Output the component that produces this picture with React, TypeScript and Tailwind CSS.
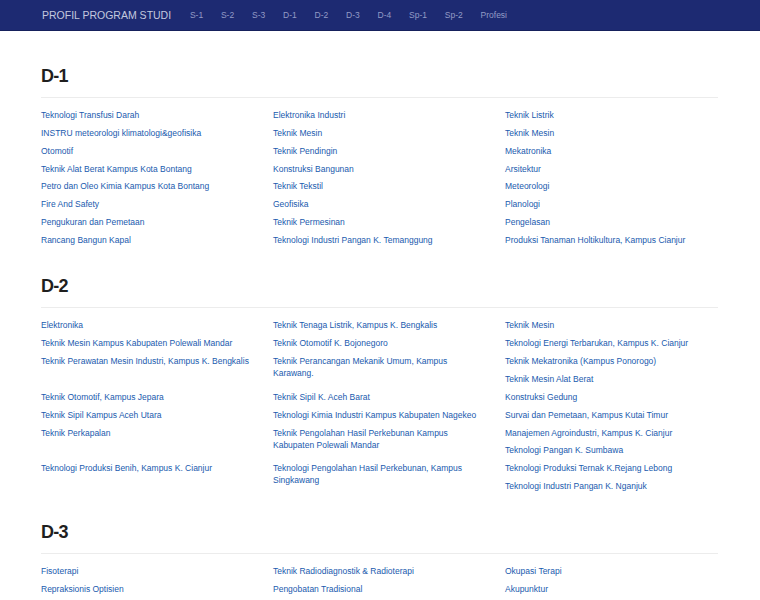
import React from 'react';

type Cell = { t: string; span?: boolean } | null;

const NAV_LINKS = ['S-1', 'S-2', 'S-3', 'D-1', 'D-2', 'D-3', 'D-4', 'Sp-1', 'Sp-2', 'Profesi'];

const c = (t: string, span = false): Cell => ({ t, span });

// cells are listed row by row; a spanning cell takes two grid rows,
// null keeps an empty slot so the next item drops into the right column
const SECTIONS: { title: string; cells: Cell[] }[] = [
  {
    title: 'D-1',
    cells: [
      c('Teknologi Transfusi Darah'), c('Elektronika Industri'), c('Teknik Listrik'),
      c('INSTRU meteorologi klimatologi&geofisika'), c('Teknik Mesin'), c('Teknik Mesin'),
      c('Otomotif'), c('Teknik Pendingin'), c('Mekatronika'),
      c('Teknik Alat Berat Kampus Kota Bontang'), c('Konstruksi Bangunan'), c('Arsitektur'),
      c('Petro dan Oleo Kimia Kampus Kota Bontang'), c('Teknik Tekstil'), c('Meteorologi'),
      c('Fire And Safety'), c('Geofisika'), c('Planologi'),
      c('Pengukuran dan Pemetaan'), c('Teknik Permesinan'), c('Pengelasan'),
      c('Rancang Bangun Kapal'), c('Teknologi Industri Pangan K. Temanggung'), c('Produksi Tanaman Holtikultura, Kampus Cianjur'),
    ],
  },
  {
    title: 'D-2',
    cells: [
      c('Elektronika'), c('Teknik Tenaga Listrik, Kampus K. Bengkalis'), c('Teknik Mesin'),
      c('Teknik Mesin Kampus Kabupaten Polewali Mandar'), c('Teknik Otomotif K. Bojonegoro'), c('Teknologi Energi Terbarukan, Kampus K. Cianjur'),
      c('Teknik Perawatan Mesin Industri, Kampus K. Bengkalis'), c('Teknik Perancangan Mekanik Umum, Kampus Karawang.', true), c('Teknik Mekatronika (Kampus Ponorogo)'),
      null, c('Teknik Mesin Alat Berat'),
      c('Teknik Otomotif, Kampus Jepara'), c('Teknik Sipil K. Aceh Barat'), c('Konstruksi Gedung'),
      c('Teknik Sipil Kampus Aceh Utara'), c('Teknologi Kimia Industri Kampus Kabupaten Nagekeo'), c('Survai dan Pemetaan, Kampus Kutai Timur'),
      c('Teknik Perkapalan'), c('Teknik Pengolahan Hasil Perkebunan Kampus Kabupaten Polewali Mandar', true), c('Manajemen Agroindustri, Kampus K. Cianjur'),
      null, c('Teknologi Pangan K. Sumbawa'),
      c('Teknologi Produksi Benih, Kampus K. Cianjur'), c('Teknologi Pengolahan Hasil Perkebunan, Kampus Singkawang', true), c('Teknologi Produksi Ternak K.Rejang Lebong'),
      null, c('Teknologi Industri Pangan K. Nganjuk'),
    ],
  },
  {
    title: 'D-3',
    cells: [
      c('Fisoterapi'), c('Teknik Radiodiagnostik & Radioterapi'), c('Okupasi Terapi'),
      c('Repraksionis Optisien'), c('Pengobatan Tradisional'), c('Akupunktur'),
    ],
  },
];

function Navbar() {
  return (
    <nav className="h-[31px] bg-[#1d2a72] border-b border-[#16215c]">
      <div className="h-full pl-[42px] flex items-center gap-[17.8px]">
        <a href="#" className="mr-[1px] text-[10.5px] text-[#c3c8de] leading-none">
          PROFIL PROGRAM STUDI
        </a>
        {NAV_LINKS.map(link => (
          <a key={link} href="#" className="text-[8.5px] text-[#939bc6] leading-none">
            {link}
          </a>
        ))}
      </div>
    </nav>
  );
}

function Section({ title, cells }: { title: string; cells: Cell[] }) {
  return (
    <section className="mt-[24.5px] first:mt-0">
      <h2 className="text-[18px] leading-[20px] font-bold tracking-[-0.8px] text-[#1f1f1f]">{title}</h2>
      <div className="mt-[11px] h-px w-[677px] bg-[#ececec]" />
      <div className="mt-[11px] grid grid-cols-[232px_232px_232px] auto-rows-[17.86px]">
        {cells.map((cell, i) =>
          cell ? (
            <div key={i} className={cell.span ? 'row-span-2 pr-[21px]' : 'pr-[21px]'}>
              <a href="#" className="text-[8.5px] leading-[12.2px] text-[#195aae] block">
                {cell.t}
              </a>
            </div>
          ) : (
            <div key={i} />
          )
        )}
      </div>
    </section>
  );
}

export default function App() {
  return (
    <div className="min-h-[600px] bg-white font-['Liberation_Sans',Arial,sans-serif]">
      <Navbar />
      <main className="pl-[41px] pt-[35px] pb-10">
        {SECTIONS.map(s => (
          <Section key={s.title} title={s.title} cells={s.cells} />
        ))}
      </main>
    </div>
  );
}
